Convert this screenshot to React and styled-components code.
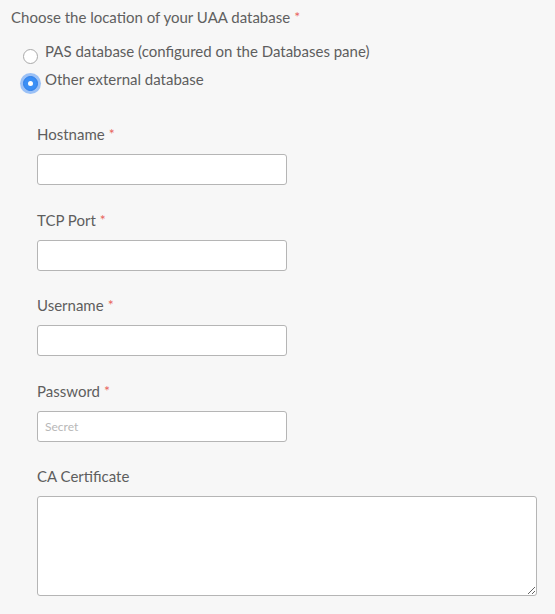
import React from "react";
import styled, { createGlobalStyle } from "styled-components";

const Global = createGlobalStyle`
  html, body { margin: 0; padding: 0; background: #f7f7f7; }
  body { font-family: "Lato", "Open Sans", sans-serif; color: #5e5e5e; }
`;

const Page = styled.div`
  width: 555px;
  height: 614px;
  background: #f7f7f7;
  box-sizing: border-box;
  padding: 6px 0 0 11px;
`;

const Title = styled.div`
  font-size: 15px;
  line-height: 22px;
  color: #606060;
`;

const Req = styled.span`
  color: #e8645d;
  font-size: 14px;
  line-height: 0;
  margin-left: 4px;
  position: relative;
  top: -1px;
`;

const RadioList = styled.div`
  display: flex;
  flex-direction: column;
  padding-left: 12px;
  margin-top: 12px;
  gap: 6px;
`;

const RadioRow = styled.label`
  display: flex;
  align-items: center;
  gap: 7px;
  font-size: 15px;
  line-height: 22px;
  color: #5e5e5e;
`;

const RadioDot = styled.span`
  width: 15px;
  height: 15px;
  border-radius: 50%;
  box-sizing: border-box;
  flex: none;
  position: relative;
  top: ${(p) => (p.$checked ? "4px" : "5px")};
  background: ${(p) => (p.$checked ? "#3b8ff5" : "#fff")};
  border: 1px solid ${(p) => (p.$checked ? "#2f7ee8" : "#a9a9a9")};
  box-shadow: ${(p) => (p.$checked ? "0 0 0 3px rgba(80,150,245,0.55)" : "none")};
  display: flex;
  align-items: center;
  justify-content: center;
  &::after {
    content: "";
    width: 5px;
    height: 5px;
    border-radius: 50%;
    background: #fff;
    display: ${(p) => (p.$checked ? "block" : "none")};
  }
`;

const Fields = styled.div`
  display: flex;
  flex-direction: column;
  padding-left: 26px;
  margin-top: 34px;
  gap: 24.5px;
`;

const Field = styled.div`
  display: flex;
  flex-direction: column;
  gap: 10px;
`;

const Label = styled.div`
  font-size: 15px;
  line-height: 20px;
  color: #5e5e5e;
`;

const Input = styled.input`
  width: 250px;
  height: 31px;
  box-sizing: border-box;
  border: 1px solid #b5b5b5;
  border-radius: 3px;
  background: #fff;
  padding: 0 7px;
  font-family: "Lato", sans-serif;
  font-size: 12px;
  color: #555;
  outline: none;
  &::placeholder { color: #b8b8b8; }
`;

const Area = styled.textarea`
  width: 500px;
  height: 100px;
  box-sizing: border-box;
  border: 1px solid #b5b5b5;
  border-radius: 3px;
  background: #fff;
  display: block;
  outline: none;
  resize: vertical;
`;

const Star = () => <Req>*</Req>;

export default function App() {
  return (
    <Page>
      <Global />
      <Title>
        Choose the location of your UAA database<Star />
      </Title>
      <RadioList>
        <RadioRow>
          <RadioDot />
          PAS database (configured on the Databases pane)
        </RadioRow>
        <RadioRow>
          <RadioDot $checked />
          Other external database
        </RadioRow>
      </RadioList>
      <Fields>
        <Field>
          <Label>Hostname<Star /></Label>
          <Input type="text" />
        </Field>
        <Field>
          <Label>TCP Port<Star /></Label>
          <Input type="text" />
        </Field>
        <Field>
          <Label>Username<Star /></Label>
          <Input type="text" />
        </Field>
        <Field>
          <Label>Password<Star /></Label>
          <Input type="password" placeholder="Secret" />
        </Field>
        <Field>
          <Label>CA Certificate</Label>
          <Area />
        </Field>
      </Fields>
    </Page>
  );
}
